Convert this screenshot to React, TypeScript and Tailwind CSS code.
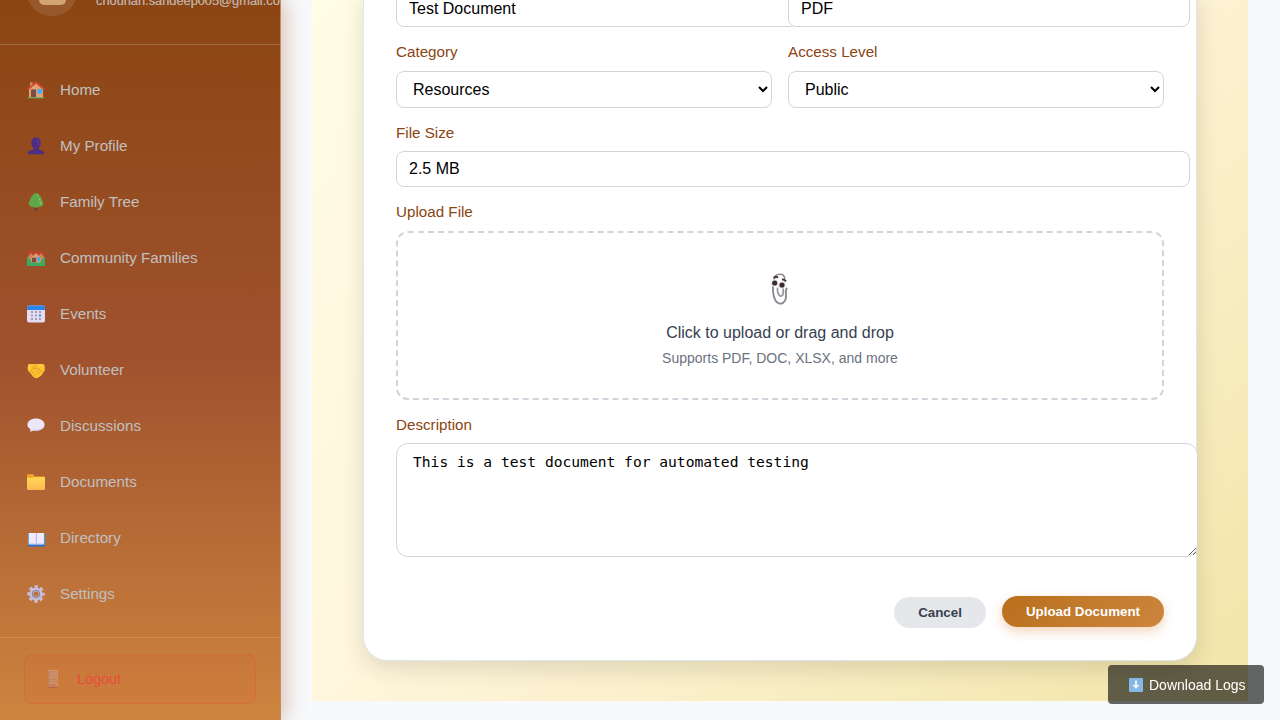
import type { ReactNode } from "react";

function Icon({ children, size = 20, className = "" }: { children: ReactNode; size?: number; className?: string }) {
  return (
    <svg width={size} height={size} viewBox="0 0 20 20" className={"shrink-0 " + className} aria-hidden="true">
      {children}
    </svg>
  );
}

const HomeIcon = () => (
  <Icon>
    <rect x="4" y="2.2" width="2.6" height="5" fill="#c98a68" />
    <path d="M3 9.5 10 3.5l7 6V18H3z" fill="#e0a176" />
    <rect x="5" y="9.5" width="5" height="7.8" fill="#7c4a40" />
    <rect x="11.4" y="9" width="4.8" height="4.8" rx=".6" fill="#3fb0f5" />
    <path d="m1.600 9.400 8.400-7 8.400 7" fill="none" stroke="#e2452f" strokeWidth="1.400" />
    <rect x="1.5" y="17.2" width="17" height="1.1" fill="#5fae55" />
  </Icon>
);
const ProfileIcon = () => (
  <Icon>
    <path d="M5.600 5.500C5.600 2.800 7.400 1.600 10 1.600s4.600 1.200 4.600 3.900v2.500c0 2.800-1.900 4.400-4.600 4.400s-4.600-1.600-4.600-4.400z" fill="#4f2d80" />
    <path d="M7.500 10.500h5.200v3l3.500 1.300c1.500.5 2.200 1.600 2.200 3.500H1.800c0-1.900.7-3 2.200-3.500l3.500-1.300z" fill="#4f2d80" />
    <path d="M12 3v7" stroke="#653c96" fill="none" opacity=".6" strokeWidth="2" />
  </Icon>
);
const TreeIcon = () => (
  <Icon>
    <rect x="8.500" y="13.500" width="3" height="5.500" rx=".8" fill="#70402f" />
    <path d="M10 1.200c-2.200 0-3.600 1.500-3.700 3-1.700.6-2.300 2.200-1.800 3.500-1.500 1-2.100 2.900-1.600 4.600.6 2 2.700 3 4.400 2.700 1.500.9 3.900.9 5.400 0 1.800.300 3.800-.7 4.400-2.700.5-1.700-.1-3.600-1.600-4.600.5-1.300-.1-2.900-1.800-3.500-.1-1.500-1.500-3-3.700-3z" fill="#5fa848" />
    <path d="M11 2.500c1 .3 1.500 1 1.500 2M12.500 6.500c1 .4 1.400 1 1.400 2M13.600 10.500c1.300.2 1.800 1 1.600 2" stroke="#82c85c" strokeWidth="1.300" fill="none" />
  </Icon>
);
const CommunityIcon = () => (
  <Icon>
    <path d="M1.500 9.500 5 5l5 2.500L15 5l3.500 4.500V17h-17z" fill="#c58861" />
    <path d="m1.300 7.500 3.500-4 3.600 4.500M18.700 7.500l-3.500-4-3.600 4.500M6.500 3.500 10 7l3.500-3.500" fill="none" stroke="#c8402c" strokeWidth="1.600" />
    <path d="M5.200 9.800 10 5l4.800 4.800V17H5.200z" fill="#dc9b70" />
    <rect x="6" y="9.800" width="4.200" height="4.600" fill="#784c40" />
    <rect x="11.400" y="9" width="2.700" height="4" fill="#36aff0" />
    <path d="M1 9.800c2.300.3 3.800 1.800 4.500 4.600h9c.7-2.800 2.200-4.300 4.500-4.600v8.200H1z" fill="#3bab60" />
  </Icon>
);
const EventsIcon = () => (
  <Icon>
    <rect x="1" y="1.500" width="18" height="17" rx="2.200" fill="#e4dcf3" />
    <path d="M1 6V3.700c0-1.200 1-2.200 2.200-2.200h13.600c1.200 0 2.200 1 2.200 2.200V6z" fill="#2b86f0" />
    {[7, 10.500, 14].map((y) =>
      [5, 9, 13].map((x) => <rect key={x + "-" + y} x={x} y={y} width="2" height="2" fill={x === 13 && y === 10.500 ? "#2793ef" : "#a5a0b5"} />),
    )}
  </Icon>
);
const VolunteerIcon = () => (
  <Icon>
    <path d="M2.600 4H17.500c1.300 1 1.700 3.800 1.200 6.500-.6 1-1.400 1.800-2 2.800-.5 1.800-1.800 3-3.400 3.700-1.300.9-2.500 1.300-3.800 1.200C7.800 17.500 6.200 16 5.200 14.200L2 10.800C1.300 8.500 1.500 5.800 2.600 4z" fill="#fbc02f" />
    <path d="M10.500 5 6.800 8.200c1.400 1.200 2.900.5 4-.4l5.400 4.200M4 11.500l2-1.500M5.800 13.500l2-2M8 15.500l1.800-2M11 11.500l2.800 2.800" fill="none" stroke="#dc9320" strokeWidth=".9" />
    <path d="M3.600 5.500v4M12 5.500l4.500.3" stroke="#ffe05c" strokeWidth="1" />
  </Icon>
);
const DiscussIcon = () => (
  <Icon>
    <path d="M10 2.600c4.800 0 8.600 2.700 8.600 6.100s-3.800 6.100-8.600 6.100c-1 0-2-.1-2.800-.4-.8.8-2 1.200-3.400 1.100.5-.6.7-1.400.6-2.300C2.600 12.100 1.400 10.500 1.400 8.700c0-3.400 3.800-6.100 8.600-6.100z" fill="#ece6f8" />
    <path d="M6.500 14c4 .9 9 .1 11.300-3.200" stroke="#cdbfe6" fill="none" />
  </Icon>
);
const FolderIcon = () => (
  <Icon>
    <path d="M1 3.500c0-.7.500-1.200 1.200-1.200h4.500c.7 0 1 .3 1.300 1l.5 1.200h9.300c.7 0 1.200.5 1.200 1.200V9H1z" fill="#f0a52c" />
    <path d="M1 6.800c0-.6.5-1 1.100-1h4.500L8.500 5h9.300c.7 0 1.200.5 1.200 1.100v10.700c0 .7-.5 1.200-1.200 1.200H2.200c-.7 0-1.200-.5-1.200-1.200z" fill="url(#folder)" />
    <defs>
      <linearGradient id="folder" x1="0" y1="0" x2="0" y2="1">
        <stop offset="0" stopColor="#ffd94e" />
        <stop offset="1" stopColor="#ffb656" />
      </linearGradient>
    </defs>
  </Icon>
);
const BookIcon = () => (
  <Icon>
    <rect x="2" y="5" width="17" height="13" rx=".8" fill="#3c9fe6" />
    <path d="M2 16.800h17v1c0 .4-.3.700-.8.700H2.800c-.5 0-.8-.3-.8-.7z" fill="#2d6fc4" />
    <path d="M2.800 5h7.400v11.200H2.800zM10.600 5h7.300v11.200h-7.300z" fill="#f1eafa" />
    <path d="M10.400 5v11.200" stroke="#c5b5df" strokeWidth="1" />
    <path d="M2.800 15.800h15" stroke="#c2d3f2" />
  </Icon>
);
const GearIcon = () => (
  <Icon>
    <circle cx="10" cy="10" r="7.200" fill="none" stroke="#c9bedb" strokeWidth="3" strokeDasharray="3.300 2.355" strokeDashoffset="1.650" />
    <circle cx="10" cy="10" r="4.600" fill="none" stroke="#c6bbd8" strokeWidth="4" />
    <circle cx="10" cy="10" r="3.500" fill="none" stroke="#8f84a5" strokeWidth="1.200" />
  </Icon>
);
const DoorIcon = () => (
  <svg width="12" height="20" viewBox="0 0 12 20" className="shrink-0 opacity-80" aria-hidden="true">
    <rect x="1" y="1" width="10" height="18" fill="#bd8367" />
    <path d="M10.200 1.500v17M1.500 1.500h9" stroke="#e8a06c" strokeWidth=".9" fill="none" />
    <rect x="2.500" y="2.500" width="6.500" height="5" fill="#c99479" />
    <rect x="2.500" y="10.500" width="6.500" height="3" fill="#c99479" />
    <path d="M2 8.700h8M2 14.300h8" stroke="#e5a05f" />
    <path d="M1 18.500h10" stroke="#c25f43" />
  </svg>
);
const ClipIcon = () => (
  <svg width="20" height="34" viewBox="0 0 20 34" className="shrink-0" aria-hidden="true">
    <path d="M4 8C4.200 4.500 6.500 2.300 9.600 2.300c3.200 0 5 1.800 5.300 4.700" fill="none" stroke="#8d8994" strokeWidth="1.500" />
    <path d="M3 13c-.3 6 .3 11.500 2.500 15.500 1.500 2.800 4.800 4 7.400 2.400 3-2 3.500-5.500 3-9.500-.3-2.200-.2-4.200 1.200-5.600" fill="none" stroke="#8d8994" strokeWidth="1.900" />
    <path d="M7.600 15.500c-.4 3 .1 6 1.800 7.800 1.600 1.500 3.700.5 3.800-2V16" fill="none" stroke="#98949f" strokeWidth="1.700" />
    <circle cx="4.300" cy="11" r="3.800" fill="#eeeaf3" />
    <circle cx="12" cy="13" r="3.800" fill="#eeeaf3" />
    <circle cx="4.700" cy="11" r="2.600" fill="#3c292c" />
    <circle cx="12" cy="13" r="2.600" fill="#3c292c" />
    <path d="M3.500 5.800c1.600-.8 3-.9 4.700-.6M12 7.300c1.700.2 3 .9 4 2.100" stroke="#4a383d" strokeWidth="2.100" fill="none" />
  </svg>
);
const DownloadIcon = () => (
  <svg width="14" height="14" viewBox="0 0 14 14" className="shrink-0" aria-hidden="true">
    <rect width="14" height="14" rx="1" fill="#83b9e4" />
    <path d="M6 2.500h2V7h2.500L7 11 3.500 7H6z" fill="#f3f1f7" />
  </svg>
);

const nav = [
  { label: "Home", icon: <HomeIcon /> },
  { label: "My Profile", icon: <ProfileIcon /> },
  { label: "Family Tree", icon: <TreeIcon /> },
  { label: "Community Families", icon: <CommunityIcon /> },
  { label: "Events", icon: <EventsIcon /> },
  { label: "Volunteer", icon: <VolunteerIcon /> },
  { label: "Discussions", icon: <DiscussIcon /> },
  { label: "Documents", icon: <FolderIcon /> },
  { label: "Directory", icon: <BookIcon /> },
  { label: "Settings", icon: <GearIcon /> },
];

function Sidebar() {
  return (
    <aside className="flex h-full w-[281px] shrink-0 flex-col overflow-hidden border-r border-[#c88a60] bg-[linear-gradient(180deg,#8b4513_0%,#a0522d_50%,#cd853f_100%)] text-[#c0c0c0]">
      <div className="flex h-[45px] shrink-0 items-end gap-[18px] border-b border-white/20 pb-7 pl-[26px]">
        <div className="flex h-[52px] w-[52px] shrink-0 items-end justify-center rounded-full bg-white/10 pb-[11px]">
          <div className="h-5 w-[27px] rounded-[5px] bg-[#d3a671]" />
        </div>
        <div className="pb-[7px] text-[12.8px] leading-4 whitespace-nowrap text-[#bdaca0] [text-shadow:0_0_0.5px_#bdaca0]">chouhan.sandeep005@gmail.com</div>
      </div>
      <nav className="flex grow flex-col pt-[17px]">
        {nav.map((item) => (
          <a key={item.label} className="flex h-14 items-center gap-[14px] pl-[26px] text-[15.2px]">
            {item.icon}
            <span>{item.label}</span>
          </a>
        ))}
      </nav>
      <div className="h-[83px] shrink-0 border-t border-[#d28b50] px-6 pt-4">
        <button className="flex h-[50px] w-[232px] items-center gap-[18px] rounded-lg border border-[#e74c3c]/30 bg-[#e74c3c]/10 pl-[22px] text-[14.4px] text-[#e74c3c]">
          <DoorIcon />
          <span className="pt-px">Logout</span>
        </button>
      </div>
    </aside>
  );
}

const Label = ({ children }: { children: ReactNode }) => <label className="block h-5 text-[15.2px] leading-5 text-[#8b4513]">{children}</label>;

const inputStyle = "block h-9 rounded-lg border border-[#d1d5db] bg-white px-3 text-base text-black";
const selectStyle = "block h-[37px] w-full rounded-lg border border-[#d1d5db] bg-white px-3 text-base text-black";

function UploadForm() {
  return (
    <form className="flex h-[670px] w-[834px] shrink-0 flex-col rounded-b-3xl border border-t-0 border-[#e2e5e9] bg-white px-8 shadow-[0_8px_25px_rgba(0,0,0,0.12)]">
      <div className="grid grid-cols-2 gap-4">
        <input className={inputStyle + " w-[402px]"} defaultValue="Test Document" />
        <input className={inputStyle + " w-[402px]"} defaultValue="PDF" />
      </div>
      <div className="mt-[15px] grid grid-cols-2 gap-4">
        <div>
          <Label>Category</Label>
          <select className={selectStyle + " mt-[9px]"}>
            <option>Resources</option>
          </select>
        </div>
        <div>
          <Label>Access Level</Label>
          <select className={selectStyle + " mt-[9px]"}>
            <option>Public</option>
          </select>
        </div>
      </div>
      <div className="mt-[15px]">
        <Label>File Size</Label>
        <input className={inputStyle + " mt-2 w-[794px]"} defaultValue="2.5 MB" />
      </div>
      <div className="mt-[15px]">
        <Label>Upload File</Label>
        <div className="mt-[9px] flex h-[169px] flex-col items-center rounded-xl border-2 border-dashed border-[#d1d5db] pt-[39px]">
          <ClipIcon />
          <p className="mt-[15px] text-base leading-6 text-[#374151]">Click to upload or drag and drop</p>
          <p className="mt-[3px] text-[14px] leading-5 text-[#6b7280]">Supports PDF, DOC, XLSX, and more</p>
        </div>
      </div>
      <div className="mt-[15px]">
        <Label>Description</Label>
        <textarea
          className="mt-2 block h-[114px] w-[802px] resize rounded-xl border border-[#d1d5db] bg-white px-4 py-2 font-['DejaVu_Sans_Mono',monospace] text-[14.62px] leading-[19px] text-black"
          defaultValue="This is a test document for automated testing"
        />
      </div>
      <div className="mt-[39px] flex justify-end gap-4 text-[13.333px] font-bold">
        <button type="button" className="mt-px h-[31px] w-[92px] rounded-full bg-[#e5e7eb] text-[#374151]">
          Cancel
        </button>
        <button type="button" className="h-[31px] w-[162px] rounded-full bg-[linear-gradient(135deg,#b8701c,#cd853f)] text-white shadow-[0_4px_12px_rgba(210,105,30,0.3)]">
          Upload Document
        </button>
      </div>
    </form>
  );
}

export default function App() {
  return (
    <div className="flex h-[720px] w-[1280px] overflow-hidden bg-[#f8f9fb] font-['Liberation_Sans',Arial,sans-serif]">
      <div className="z-10 flex shadow-[4px_0_20px_rgba(139,69,19,0.3)]">
        <Sidebar />
      </div>
      <main className="ml-[31px] flex h-[701px] w-[936px] items-end overflow-hidden bg-[linear-gradient(135deg,#fffde4_0%,#fff6dd_43%,#f2e5a8_100%)] pb-10 pl-[51px]">
        <UploadForm />
      </main>
      <button className="fixed right-4 bottom-4 z-20 flex h-[39px] w-[156px] items-center gap-[6px] rounded bg-black/60 pl-[21px] text-sm text-white">
        <DownloadIcon />
        <span>Download Logs</span>
      </button>
    </div>
  );
}
